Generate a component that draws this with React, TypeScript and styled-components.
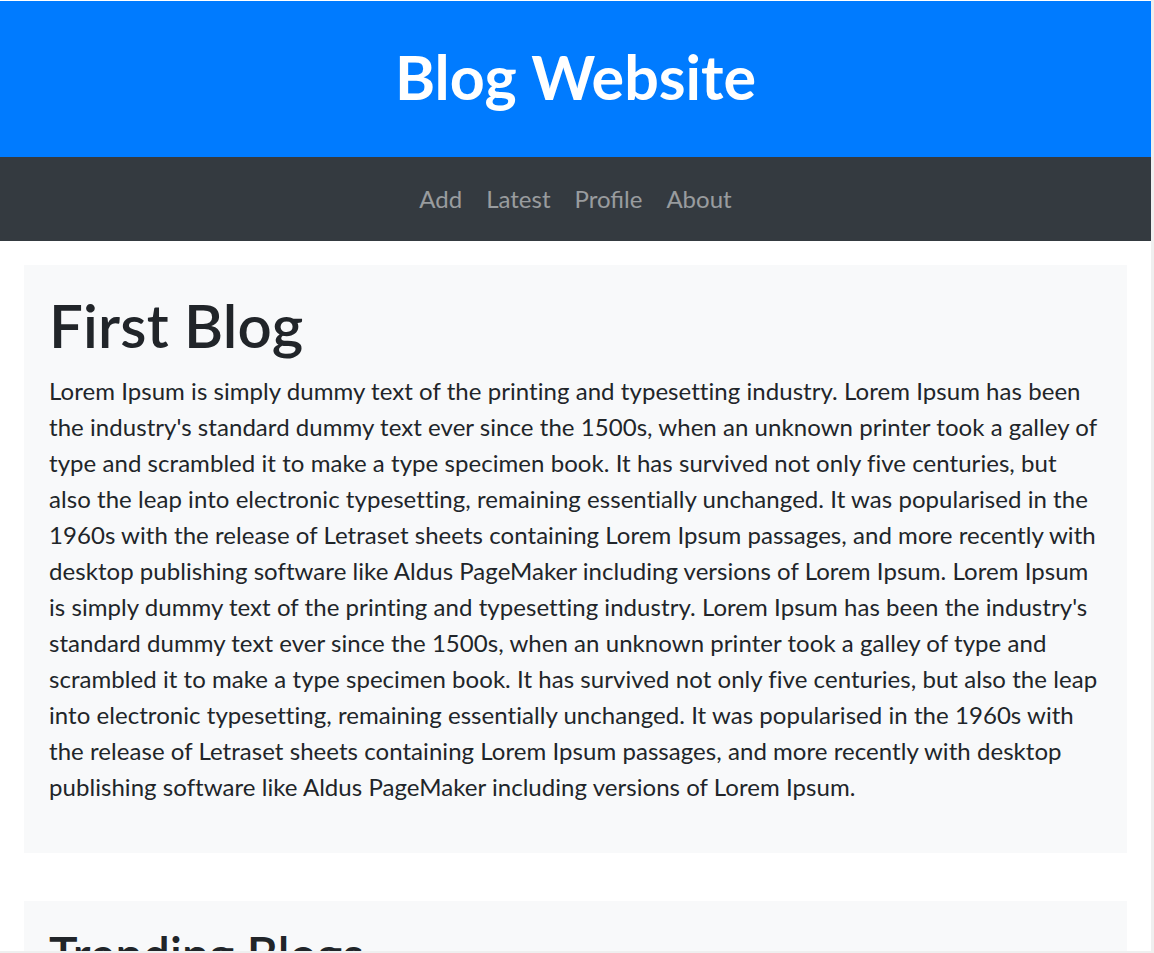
import React from 'react'
import styled, { createGlobalStyle } from 'styled-components'

const GlobalStyle = createGlobalStyle`
  html {
    background: #efefef;
  }
  body {
    margin: 0;
    font-family: Lato, "Noto Sans", sans-serif;
    color: #212529;
  }
`

const Page = styled.div`
  width: 1151px;
  height: 951px;
  overflow: hidden;
  background: #ffffff;
  padding-top: 1px;
  box-sizing: border-box;
`

const Header = styled.header`
  height: 156px;
  background: #007bff;
  display: flex;
  align-items: center;
  justify-content: center;
`

const SiteTitle = styled.h1`
  margin: 0 0 4px;
  color: #ffffff;
  font-size: 61px;
  font-weight: 700;
  line-height: 1.2;
`

const NavBar = styled.nav`
  height: 84px;
  background: #343a40;
  display: flex;
  align-items: center;
  justify-content: center;
`

const NavLink = styled.a`
  padding: 0 12px;
  font-size: 24px;
  line-height: 36px;
  color: rgba(255, 255, 255, 0.5);
  text-decoration: none;
  cursor: pointer;
`

const Main = styled.main`
  padding: 24px;
  display: flex;
  flex-direction: column;
  gap: 48px;
`

const Card = styled.section`
  background: #f8f9fa;
  padding: 24px 26px 24px 25px;
`

const Title = styled.h2<{ $size: number }>`
  margin: 0 0 12px;
  font-size: ${(p) => p.$size}px;
  font-weight: 600;
  line-height: 1.2;
  letter-spacing: 0.2px;
`

const Body = styled.p`
  margin: 0 0 24px;
  font-size: 24px;
  line-height: 36px;
  letter-spacing: 0.05px;
`

const lorem =
  "Lorem Ipsum is simply dummy text of the printing and typesetting industry. Lorem Ipsum has been the industry's standard dummy text ever since the 1500s, when an unknown printer took a galley of type and scrambled it to make a type specimen book. It has survived not only five centuries, but also the leap into electronic typesetting, remaining essentially unchanged. It was popularised in the 1960s with the release of Letraset sheets containing Lorem Ipsum passages, and more recently with desktop publishing software like Aldus PageMaker including versions of Lorem Ipsum."

const links = ['Add', 'Latest', 'Profile', 'About']

const App = () => {
  return (
    <Page>
      <GlobalStyle />
      <Header>
        <SiteTitle>Blog Website</SiteTitle>
      </Header>
      <NavBar>
        {links.map((l) => (
          <NavLink key={l}>{l}</NavLink>
        ))}
      </NavBar>
      <Main>
        <Card>
          <Title $size={60}>First Blog</Title>
          <Body>
            {lorem} {lorem}
          </Body>
        </Card>
        <Card>
          <Title $size={48}>Trending Blogs</Title>
          <Body>{lorem}</Body>
        </Card>
      </Main>
    </Page>
  )
}

export default App
